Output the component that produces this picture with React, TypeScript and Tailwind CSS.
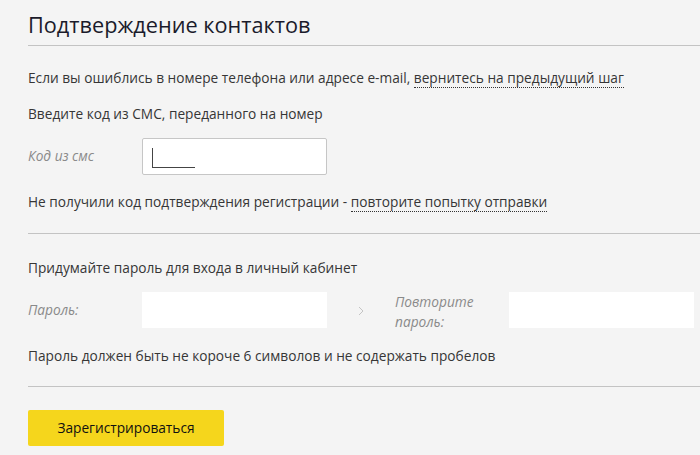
import React from "react";

export default function App() {
  const font = { fontFamily: '"Open Sans", "Noto Sans", sans-serif' };
  return (
    <div className="w-[700px] h-[455px] bg-[#f4f4f4] text-[#363636] overflow-hidden" style={font}>
      <div className="pl-[28px]">
        <h1 className="text-[21.7px] leading-[30px] pt-[10px] pb-[5px] text-[#1b1b2b] font-normal">
          Подтверждение контактов
        </h1>
        <div className="h-px bg-[#c3c3c3]" />
        <p className="text-[13.7px] leading-[20px] mt-[22px]">
          Если вы ошиблись в номере телефона или адресе e-mail,{" "}
          <span className="border-b border-dotted border-[#333]">вернитесь на предыдущий шаг</span>
        </p>
        <p className="text-[13.7px] leading-[20px] mt-[16px]">Введите код из СМС, переданного на номер</p>
        <div className="flex items-center mt-[14px]">
          <div className="w-[114px] italic text-[13.7px] text-[#8a8a8a]">Код из смс</div>
          <div className="w-[185px] h-[37px] bg-white border border-[#c6c6c6] rounded-[2px] flex items-center pl-[9px]">
            <div className="flex items-end h-[20px] mt-[2px]">
              <div className="w-px h-[20px] bg-[#444]" />
              <div className="w-[42px] h-px bg-[#444]" />
            </div>
          </div>
        </div>
        <p className="text-[13.7px] leading-[20px] mt-[17px]">
          Не получили код подтверждения регистрации -{" "}
          <span className="border-b border-dotted border-[#333]">повторите попытку отправки</span>
        </p>
        <div className="h-px bg-[#c3c3c3] mt-[21px]" />
        <p className="text-[13.7px] leading-[20px] mt-[24px]">Придумайте пароль для входа в личный кабинет</p>
        <div className="flex items-center mt-[12px]">
          <div className="w-[114px] italic text-[13.7px] text-[#8a8a8a]">Пароль:</div>
          <div className="w-[185px] h-[36px] bg-white" />
          <div className="w-[68px] flex justify-center">
            <svg width="6" height="10" viewBox="0 0 6 10" className="mt-[2px]">
              <path d="M1 1 L5 5 L1 9" fill="none" stroke="#c4c4c4" strokeWidth="1" />
            </svg>
          </div>
          <div className="w-[114px] italic text-[13.7px] leading-[20px] text-[#8a8a8a] mt-[2px] mb-[-2px]">
            Повторите
            <br />
            пароль:
          </div>
          <div className="w-[185px] h-[36px] bg-white" />
        </div>
        <p className="text-[13.7px] leading-[20px] mt-[16px]">
          Пароль должен быть не короче 6 символов и не содержать пробелов
        </p>
        <div className="h-px bg-[#c3c3c3] mt-[20px]" />
        <button className="mt-[23px] w-[196px] h-[36px] bg-[#f5d61c] rounded-[2px] text-[13.7px] text-[#111]">
          Зарегистрироваться
        </button>
      </div>
    </div>
  );
}
